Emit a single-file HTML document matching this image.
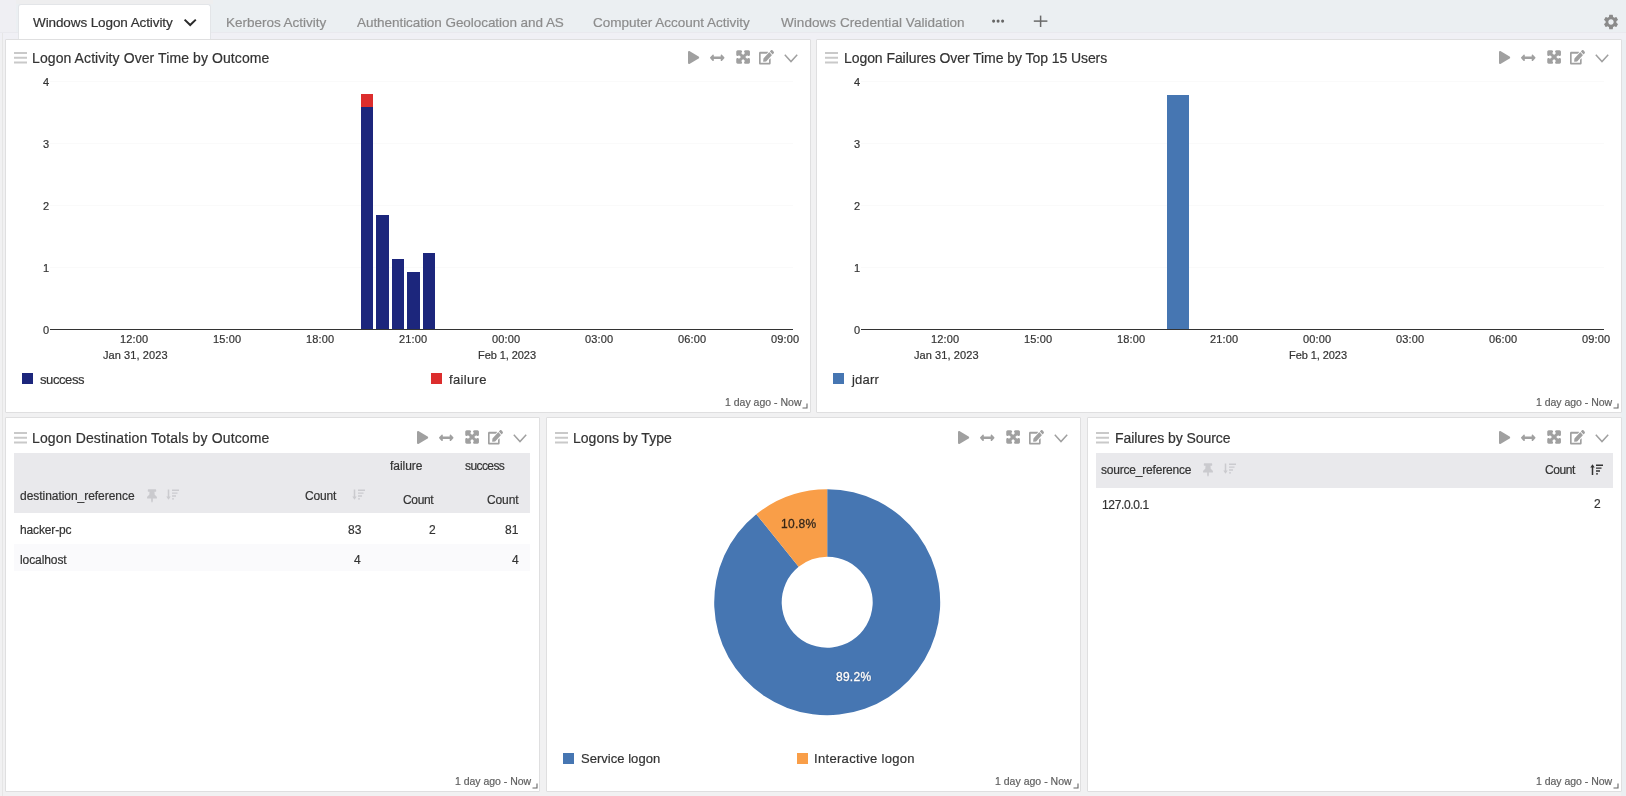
<!DOCTYPE html>
<html><head><meta charset="utf-8"><style>
html,body{margin:0;padding:0;width:1626px;height:796px;overflow:hidden;background:#ebeff2;font-family:"Liberation Sans", sans-serif;}
body{position:relative;}
</style></head><body>
<div style="position:absolute;left:0px;top:0px;width:1626px;height:32px;background:#ebeff2"></div>
<div style="position:absolute;left:0px;top:0px;width:16px;height:32px;background:#efeff3"></div>
<div style="position:absolute;left:16px;top:0px;width:197px;height:4px;background:#eeeeef"></div>
<div style="position:absolute;left:0px;top:32px;width:1621px;height:764px;background:#f1f1f2"></div>
<div style="position:absolute;left:0px;top:32px;width:1626px;height:8px;background:#f0f0f5"></div>
<div style="position:absolute;left:1621px;top:40px;width:5px;height:756px;background:#ebeff2"></div>
<div style="position:absolute;left:0px;top:32px;width:1626px;height:1px;background:#e9e9ee"></div>
<div style="position:absolute;left:2px;top:33px;width:1px;height:763px;background:#e6e6e6"></div>
<div style="position:absolute;left:18px;top:4px;width:193px;height:36px;background:#fff;border:1px solid #e3e5e8;border-bottom:none;border-radius:3px 3px 0 0;box-sizing:border-box"></div>
<div style="position:absolute;left:33.30px;top:16px;font-size:13.5px;line-height:13.5px;color:#333;letter-spacing:-0.101px;white-space:nowrap;will-change:transform;-webkit-text-stroke:0.2px #333;font-weight:normal;">Windows Logon Activity</div>
<svg style="position:absolute;left:183px;top:16.5px" width="15" height="10" viewBox="0 0 15 10"><polyline points="1.6,2.6 7.2,8 12.8,2.6" fill="none" stroke="#2a2a2a" stroke-width="2"/></svg>
<div style="position:absolute;left:226.30px;top:16px;font-size:13.5px;line-height:13.5px;color:#8c8c8c;letter-spacing:-0.021px;white-space:nowrap;will-change:transform;-webkit-text-stroke:0.2px #8c8c8c;font-weight:normal;">Kerberos Activity</div>
<div style="position:absolute;left:356.80px;top:16px;font-size:13.5px;line-height:13.5px;color:#8c8c8c;letter-spacing:-0.056px;white-space:nowrap;will-change:transform;-webkit-text-stroke:0.2px #8c8c8c;font-weight:normal;">Authentication Geolocation and AS</div>
<div style="position:absolute;left:593.30px;top:16px;font-size:13.5px;line-height:13.5px;color:#8c8c8c;letter-spacing:-0.002px;white-space:nowrap;will-change:transform;-webkit-text-stroke:0.2px #8c8c8c;font-weight:normal;">Computer Account Activity</div>
<div style="position:absolute;left:780.70px;top:16px;font-size:13.5px;line-height:13.5px;color:#8c8c8c;letter-spacing:0.054px;white-space:nowrap;will-change:transform;-webkit-text-stroke:0.2px #8c8c8c;font-weight:normal;">Windows Credential Validation</div>
<svg style="position:absolute;left:985px;top:10px" width="70" height="24" viewBox="985 10 70 24"><circle cx="993.6" cy="21.1" r="1.55" fill="#666"/><circle cx="998.1" cy="21.1" r="1.55" fill="#666"/><circle cx="1002.6" cy="21.1" r="1.55" fill="#666"/><rect x="1033.8" y="20.35" width="13.6" height="1.5" fill="#6a6a6a"/><rect x="1039.85" y="15.6" width="1.5" height="11.4" fill="#6a6a6a"/></svg>
<svg style="position:absolute;left:1601.5px;top:12.6px" width="18" height="18" viewBox="0 0 24 24"><path fill="#8a8a8a" d="M19.14 12.94c.04-.3.06-.61.06-.94 0-.32-.02-.64-.07-.94l2.03-1.58a.49.49 0 0 0 .12-.61l-1.920-3.32a.488.488 0 0 0-.59-.22l-2.39.96c-.5-.38-1.03-.7-1.62-.94l-.36-2.54a.484.484 0 0 0-.48-.41h-3.84c-.24 0-.43.17-.47.41l-.36 2.54c-.59.24-1.13.57-1.62.94l-2.39-.96c-.22-.08-.47 0-.59.22L2.74 8.870c-.12.21-.08.47.12.61l2.03 1.58c-.05.3-.09.63-.09.94s.02.64.07.94l-2.03 1.58a.49.49 0 0 0-.12.61l1.92 3.32c.12.22.37.29.59.22l2.39-.96c.5.38 1.03.7 1.62.94l.36 2.54c.05.24.24.41.48.41h3.84c.24 0 .44-.17.47-.41l.36-2.54c.59-.24 1.13-.56 1.62-.94l2.39.96c.22.08.47 0 .59-.22l1.92-3.32c.12-.22.07-.47-.12-.61l-2.01-1.58zM12 15.6c-1.98 0-3.6-1.62-3.6-3.6s1.62-3.6 3.6-3.6 3.6 1.62 3.6 3.6-1.62 3.6-3.6 3.6z"/></svg>
<div style="position:absolute;left:5px;top:39px;width:806px;height:374px;background:#fff;border:1px solid #dfdfe0;box-sizing:border-box;border-radius:1px"></div>
<div style="position:absolute;left:816px;top:39px;width:806px;height:374px;background:#fff;border:1px solid #dfdfe0;box-sizing:border-box;border-radius:1px"></div>
<div style="position:absolute;left:5px;top:417px;width:535px;height:375px;background:#fff;border:1px solid #dfdfe0;box-sizing:border-box;border-radius:1px"></div>
<div style="position:absolute;left:546px;top:417px;width:535px;height:375px;background:#fff;border:1px solid #dfdfe0;box-sizing:border-box;border-radius:1px"></div>
<div style="position:absolute;left:1087px;top:417px;width:535px;height:375px;background:#fff;border:1px solid #dfdfe0;box-sizing:border-box;border-radius:1px"></div>
<svg style="position:absolute;left:14px;top:49.8px" width="13" height="16" viewBox="0 0 13 16"><rect x="0" y="2" width="13" height="2" fill="#c9c9c9"/><rect x="0" y="6.75" width="13" height="2" fill="#c9c9c9"/><rect x="0" y="11.5" width="13" height="2" fill="#c9c9c9"/></svg>
<div style="position:absolute;left:32.40px;top:51px;font-size:14px;line-height:14px;color:#333;letter-spacing:0.093px;white-space:nowrap;will-change:transform;-webkit-text-stroke:0.2px #333;font-weight:normal;">Logon Activity Over Time by Outcome</div>
<svg style="position:absolute;left:688px;top:50.8px;overflow:visible" width="11.2" height="13" viewBox="0 0 448 512" preserveAspectRatio="none"><path d="M424.4 214.7L72.4 6.6C43.8-10.3 0 6.1 0 47.9V464c0 37.5 40.7 60.1 72.4 41.3l352-208c31.4-18.5 31.5-64.1 0-82.6z" fill="#a0a0a0"/></svg>
<svg style="position:absolute;left:710px;top:53.5px;overflow:visible" width="14.5" height="7.6" viewBox="0 130 512 252" preserveAspectRatio="none"><path d="M377.941 169.941V216H134.059v-46.059c0-21.382-25.851-32.090-40.971-16.971L7.029 239.029c-9.373 9.373-9.373 24.568 0 33.941l86.059 86.059c15.119 15.119 40.971 4.411 40.971-16.971V296h243.882v46.059c0 21.382 25.851 32.090 40.971 16.971l86.059-86.059c9.373-9.373 9.373-24.568 0-33.941l-86.059-86.059c-15.119-15.120-40.971-4.412-40.971 16.970z" fill="#a0a0a0"/></svg>
<svg style="position:absolute;left:736.7px;top:51.3px;overflow:visible" width="12.2" height="12" viewBox="0 32 448 448" preserveAspectRatio="none"><path d="M448 344v112a23.940 23.940 0 0 1-24 24H312c-21.390 0-32.090-25.900-17-41l36.200-36.200L224 295.600 116.770 402.900 153 439c15.090 15.100 4.390 41-17 41H24a23.940 23.940 0 0 1-24-24V344c0-21.400 25.890-32.100 41-17l36.190 36.200L184.500 256 77.210 148.700 41 185c-15.100 15.100-41 4.400-41-17V56a23.940 23.940 0 0 1 24-24h112c21.390 0 32.090 25.900 17 41l-36.200 36.200L224 216.400l107.230-107.300L295 73c-15.090-15.100-4.390-41 17-41h112a23.940 23.940 0 0 1 24 24v112c0 21.400-25.890 32.100-41 17l-36.190-36.200L263.500 256l107.300 107.300L407 327.100c15.100-15.200 41-4.500 41 16.900z" fill="#a0a0a0" stroke="#a0a0a0" stroke-width="55" stroke-linejoin="round"/></svg>
<svg style="position:absolute;left:758.8px;top:50.199999999999996px;overflow:visible" width="15" height="14.6" viewBox="0 0 576 512" preserveAspectRatio="none"><path d="M402.6 83.2l90.2 90.2c3.8 3.8 3.8 10 0 13.8L274.4 405.6l-92.8 10.3c-12.4 1.4-22.9-9.1-21.5-21.5l10.3-92.8L388.8 83.2c3.8-3.8 10-3.8 13.8 0zm162-22.9l-48.8-48.8c-15.2-15.2-39.9-15.2-55.2 0l-35.4 35.4c-3.8 3.8-3.8 10 0 13.8l90.2 90.2c3.8 3.8 10 3.8 13.8 0l35.4-35.4c15.2-15.3 15.2-40 0-55.2zM384 346.2V448H64V128h229.8c3.2 0 6.2-1.3 8.5-3.5l40-40c7.6-7.6 2.2-20.5-8.5-20.5H48C21.5 64 0 85.5 0 112v352c0 26.5 21.5 48 48 48h352c26.5 0 48-21.5 48-48V306.2c0-10.7-12.9-16-20.5-8.5l-40 40c-2.2 2.3-3.5 5.3-3.5 8.5z" fill="#a0a0a0"/></svg>
<svg style="position:absolute;left:783.5px;top:53.8px" width="14" height="9" viewBox="0 0 14 9"><polyline points="0.8,0.8 7,7.6 13.2,0.8" fill="none" stroke="#a0a0a0" stroke-width="1.5"/></svg>
<svg style="position:absolute;left:825px;top:49.8px" width="13" height="16" viewBox="0 0 13 16"><rect x="0" y="2" width="13" height="2" fill="#c9c9c9"/><rect x="0" y="6.75" width="13" height="2" fill="#c9c9c9"/><rect x="0" y="11.5" width="13" height="2" fill="#c9c9c9"/></svg>
<div style="position:absolute;left:843.60px;top:51px;font-size:14px;line-height:14px;color:#333;letter-spacing:-0.068px;white-space:nowrap;will-change:transform;-webkit-text-stroke:0.2px #333;font-weight:normal;">Logon Failures Over Time by Top 15 Users</div>
<svg style="position:absolute;left:1499px;top:50.8px;overflow:visible" width="11.2" height="13" viewBox="0 0 448 512" preserveAspectRatio="none"><path d="M424.4 214.7L72.4 6.6C43.8-10.3 0 6.1 0 47.9V464c0 37.5 40.7 60.1 72.4 41.3l352-208c31.4-18.5 31.5-64.1 0-82.6z" fill="#a0a0a0"/></svg>
<svg style="position:absolute;left:1521px;top:53.5px;overflow:visible" width="14.5" height="7.6" viewBox="0 130 512 252" preserveAspectRatio="none"><path d="M377.941 169.941V216H134.059v-46.059c0-21.382-25.851-32.090-40.971-16.971L7.029 239.029c-9.373 9.373-9.373 24.568 0 33.941l86.059 86.059c15.119 15.119 40.971 4.411 40.971-16.971V296h243.882v46.059c0 21.382 25.851 32.090 40.971 16.971l86.059-86.059c9.373-9.373 9.373-24.568 0-33.941l-86.059-86.059c-15.119-15.120-40.971-4.412-40.971 16.970z" fill="#a0a0a0"/></svg>
<svg style="position:absolute;left:1547.7px;top:51.3px;overflow:visible" width="12.2" height="12" viewBox="0 32 448 448" preserveAspectRatio="none"><path d="M448 344v112a23.940 23.940 0 0 1-24 24H312c-21.390 0-32.090-25.900-17-41l36.200-36.200L224 295.600 116.770 402.900 153 439c15.090 15.100 4.390 41-17 41H24a23.940 23.940 0 0 1-24-24V344c0-21.400 25.890-32.100 41-17l36.190 36.200L184.500 256 77.210 148.700 41 185c-15.100 15.100-41 4.400-41-17V56a23.940 23.940 0 0 1 24-24h112c21.390 0 32.090 25.900 17 41l-36.200 36.200L224 216.400l107.230-107.300L295 73c-15.090-15.100-4.390-41 17-41h112a23.940 23.940 0 0 1 24 24v112c0 21.400-25.890 32.100-41 17l-36.190-36.200L263.500 256l107.300 107.300L407 327.100c15.100-15.200 41-4.500 41 16.900z" fill="#a0a0a0" stroke="#a0a0a0" stroke-width="55" stroke-linejoin="round"/></svg>
<svg style="position:absolute;left:1569.8px;top:50.199999999999996px;overflow:visible" width="15" height="14.6" viewBox="0 0 576 512" preserveAspectRatio="none"><path d="M402.6 83.2l90.2 90.2c3.8 3.8 3.8 10 0 13.8L274.4 405.6l-92.8 10.3c-12.4 1.4-22.9-9.1-21.5-21.5l10.3-92.8L388.8 83.2c3.8-3.8 10-3.8 13.8 0zm162-22.9l-48.8-48.8c-15.2-15.2-39.9-15.2-55.2 0l-35.4 35.4c-3.8 3.8-3.8 10 0 13.8l90.2 90.2c3.8 3.8 10 3.8 13.8 0l35.4-35.4c15.2-15.3 15.2-40 0-55.2zM384 346.2V448H64V128h229.8c3.2 0 6.2-1.3 8.5-3.5l40-40c7.6-7.6 2.2-20.5-8.5-20.5H48C21.5 64 0 85.5 0 112v352c0 26.5 21.5 48 48 48h352c26.5 0 48-21.5 48-48V306.2c0-10.7-12.9-16-20.5-8.5l-40 40c-2.2 2.3-3.5 5.3-3.5 8.5z" fill="#a0a0a0"/></svg>
<svg style="position:absolute;left:1594.5px;top:53.8px" width="14" height="9" viewBox="0 0 14 9"><polyline points="0.8,0.8 7,7.6 13.2,0.8" fill="none" stroke="#a0a0a0" stroke-width="1.5"/></svg>
<svg style="position:absolute;left:14px;top:429.8px" width="13" height="16" viewBox="0 0 13 16"><rect x="0" y="2" width="13" height="2" fill="#c9c9c9"/><rect x="0" y="6.75" width="13" height="2" fill="#c9c9c9"/><rect x="0" y="11.5" width="13" height="2" fill="#c9c9c9"/></svg>
<div style="position:absolute;left:32.40px;top:431px;font-size:14px;line-height:14px;color:#333;letter-spacing:0.144px;white-space:nowrap;will-change:transform;-webkit-text-stroke:0.2px #333;font-weight:normal;">Logon Destination Totals by Outcome</div>
<svg style="position:absolute;left:417px;top:430.8px;overflow:visible" width="11.2" height="13" viewBox="0 0 448 512" preserveAspectRatio="none"><path d="M424.4 214.7L72.4 6.6C43.8-10.3 0 6.1 0 47.9V464c0 37.5 40.7 60.1 72.4 41.3l352-208c31.4-18.5 31.5-64.1 0-82.6z" fill="#a0a0a0"/></svg>
<svg style="position:absolute;left:439px;top:433.5px;overflow:visible" width="14.5" height="7.6" viewBox="0 130 512 252" preserveAspectRatio="none"><path d="M377.941 169.941V216H134.059v-46.059c0-21.382-25.851-32.090-40.971-16.971L7.029 239.029c-9.373 9.373-9.373 24.568 0 33.941l86.059 86.059c15.119 15.119 40.971 4.411 40.971-16.971V296h243.882v46.059c0 21.382 25.851 32.090 40.971 16.971l86.059-86.059c9.373-9.373 9.373-24.568 0-33.941l-86.059-86.059c-15.119-15.120-40.971-4.412-40.971 16.970z" fill="#a0a0a0"/></svg>
<svg style="position:absolute;left:465.7px;top:431.3px;overflow:visible" width="12.2" height="12" viewBox="0 32 448 448" preserveAspectRatio="none"><path d="M448 344v112a23.940 23.940 0 0 1-24 24H312c-21.390 0-32.090-25.900-17-41l36.200-36.200L224 295.600 116.770 402.900 153 439c15.090 15.100 4.390 41-17 41H24a23.940 23.940 0 0 1-24-24V344c0-21.400 25.890-32.100 41-17l36.190 36.200L184.500 256 77.210 148.700 41 185c-15.100 15.100-41 4.400-41-17V56a23.940 23.940 0 0 1 24-24h112c21.390 0 32.090 25.900 17 41l-36.200 36.200L224 216.400l107.230-107.300L295 73c-15.090-15.100-4.390-41 17-41h112a23.940 23.940 0 0 1 24 24v112c0 21.400-25.890 32.100-41 17l-36.190-36.200L263.500 256l107.300 107.300L407 327.100c15.100-15.200 41-4.500 41 16.900z" fill="#a0a0a0" stroke="#a0a0a0" stroke-width="55" stroke-linejoin="round"/></svg>
<svg style="position:absolute;left:487.8px;top:430.2px;overflow:visible" width="15" height="14.6" viewBox="0 0 576 512" preserveAspectRatio="none"><path d="M402.6 83.2l90.2 90.2c3.8 3.8 3.8 10 0 13.8L274.4 405.6l-92.8 10.3c-12.4 1.4-22.9-9.1-21.5-21.5l10.3-92.8L388.8 83.2c3.8-3.8 10-3.8 13.8 0zm162-22.9l-48.8-48.8c-15.2-15.2-39.9-15.2-55.2 0l-35.4 35.4c-3.8 3.8-3.8 10 0 13.8l90.2 90.2c3.8 3.8 10 3.8 13.8 0l35.4-35.4c15.2-15.3 15.2-40 0-55.2zM384 346.2V448H64V128h229.8c3.2 0 6.2-1.3 8.5-3.5l40-40c7.6-7.6 2.2-20.5-8.5-20.5H48C21.5 64 0 85.5 0 112v352c0 26.5 21.5 48 48 48h352c26.5 0 48-21.5 48-48V306.2c0-10.7-12.9-16-20.5-8.5l-40 40c-2.2 2.3-3.5 5.3-3.5 8.5z" fill="#a0a0a0"/></svg>
<svg style="position:absolute;left:512.5px;top:433.8px" width="14" height="9" viewBox="0 0 14 9"><polyline points="0.8,0.8 7,7.6 13.2,0.8" fill="none" stroke="#a0a0a0" stroke-width="1.5"/></svg>
<svg style="position:absolute;left:555px;top:429.8px" width="13" height="16" viewBox="0 0 13 16"><rect x="0" y="2" width="13" height="2" fill="#c9c9c9"/><rect x="0" y="6.75" width="13" height="2" fill="#c9c9c9"/><rect x="0" y="11.5" width="13" height="2" fill="#c9c9c9"/></svg>
<div style="position:absolute;left:572.80px;top:431px;font-size:14px;line-height:14px;color:#333;letter-spacing:0.011px;white-space:nowrap;will-change:transform;-webkit-text-stroke:0.2px #333;font-weight:normal;">Logons by Type</div>
<svg style="position:absolute;left:958px;top:430.8px;overflow:visible" width="11.2" height="13" viewBox="0 0 448 512" preserveAspectRatio="none"><path d="M424.4 214.7L72.4 6.6C43.8-10.3 0 6.1 0 47.9V464c0 37.5 40.7 60.1 72.4 41.3l352-208c31.4-18.5 31.5-64.1 0-82.6z" fill="#a0a0a0"/></svg>
<svg style="position:absolute;left:980px;top:433.5px;overflow:visible" width="14.5" height="7.6" viewBox="0 130 512 252" preserveAspectRatio="none"><path d="M377.941 169.941V216H134.059v-46.059c0-21.382-25.851-32.090-40.971-16.971L7.029 239.029c-9.373 9.373-9.373 24.568 0 33.941l86.059 86.059c15.119 15.119 40.971 4.411 40.971-16.971V296h243.882v46.059c0 21.382 25.851 32.090 40.971 16.971l86.059-86.059c9.373-9.373 9.373-24.568 0-33.941l-86.059-86.059c-15.119-15.120-40.971-4.412-40.971 16.970z" fill="#a0a0a0"/></svg>
<svg style="position:absolute;left:1006.7px;top:431.3px;overflow:visible" width="12.2" height="12" viewBox="0 32 448 448" preserveAspectRatio="none"><path d="M448 344v112a23.940 23.940 0 0 1-24 24H312c-21.390 0-32.090-25.900-17-41l36.200-36.200L224 295.600 116.770 402.900 153 439c15.090 15.100 4.390 41-17 41H24a23.940 23.940 0 0 1-24-24V344c0-21.400 25.890-32.100 41-17l36.190 36.200L184.500 256 77.210 148.700 41 185c-15.100 15.100-41 4.400-41-17V56a23.940 23.940 0 0 1 24-24h112c21.390 0 32.090 25.900 17 41l-36.200 36.200L224 216.400l107.230-107.300L295 73c-15.090-15.100-4.390-41 17-41h112a23.940 23.940 0 0 1 24 24v112c0 21.400-25.890 32.100-41 17l-36.190-36.200L263.500 256l107.300 107.300L407 327.100c15.100-15.200 41-4.500 41 16.900z" fill="#a0a0a0" stroke="#a0a0a0" stroke-width="55" stroke-linejoin="round"/></svg>
<svg style="position:absolute;left:1028.8px;top:430.2px;overflow:visible" width="15" height="14.6" viewBox="0 0 576 512" preserveAspectRatio="none"><path d="M402.6 83.2l90.2 90.2c3.8 3.8 3.8 10 0 13.8L274.4 405.6l-92.8 10.3c-12.4 1.4-22.9-9.1-21.5-21.5l10.3-92.8L388.8 83.2c3.8-3.8 10-3.8 13.8 0zm162-22.9l-48.8-48.8c-15.2-15.2-39.9-15.2-55.2 0l-35.4 35.4c-3.8 3.8-3.8 10 0 13.8l90.2 90.2c3.8 3.8 10 3.8 13.8 0l35.4-35.4c15.2-15.3 15.2-40 0-55.2zM384 346.2V448H64V128h229.8c3.2 0 6.2-1.3 8.5-3.5l40-40c7.6-7.6 2.2-20.5-8.5-20.5H48C21.5 64 0 85.5 0 112v352c0 26.5 21.5 48 48 48h352c26.5 0 48-21.5 48-48V306.2c0-10.7-12.9-16-20.5-8.5l-40 40c-2.2 2.3-3.5 5.3-3.5 8.5z" fill="#a0a0a0"/></svg>
<svg style="position:absolute;left:1053.5px;top:433.8px" width="14" height="9" viewBox="0 0 14 9"><polyline points="0.8,0.8 7,7.6 13.2,0.8" fill="none" stroke="#a0a0a0" stroke-width="1.5"/></svg>
<svg style="position:absolute;left:1096px;top:429.8px" width="13" height="16" viewBox="0 0 13 16"><rect x="0" y="2" width="13" height="2" fill="#c9c9c9"/><rect x="0" y="6.75" width="13" height="2" fill="#c9c9c9"/><rect x="0" y="11.5" width="13" height="2" fill="#c9c9c9"/></svg>
<div style="position:absolute;left:1114.70px;top:431px;font-size:14px;line-height:14px;color:#333;letter-spacing:-0.072px;white-space:nowrap;will-change:transform;-webkit-text-stroke:0.2px #333;font-weight:normal;">Failures by Source</div>
<svg style="position:absolute;left:1499px;top:430.8px;overflow:visible" width="11.2" height="13" viewBox="0 0 448 512" preserveAspectRatio="none"><path d="M424.4 214.7L72.4 6.6C43.8-10.3 0 6.1 0 47.9V464c0 37.5 40.7 60.1 72.4 41.3l352-208c31.4-18.5 31.5-64.1 0-82.6z" fill="#a0a0a0"/></svg>
<svg style="position:absolute;left:1521px;top:433.5px;overflow:visible" width="14.5" height="7.6" viewBox="0 130 512 252" preserveAspectRatio="none"><path d="M377.941 169.941V216H134.059v-46.059c0-21.382-25.851-32.090-40.971-16.971L7.029 239.029c-9.373 9.373-9.373 24.568 0 33.941l86.059 86.059c15.119 15.119 40.971 4.411 40.971-16.971V296h243.882v46.059c0 21.382 25.851 32.090 40.971 16.971l86.059-86.059c9.373-9.373 9.373-24.568 0-33.941l-86.059-86.059c-15.119-15.120-40.971-4.412-40.971 16.970z" fill="#a0a0a0"/></svg>
<svg style="position:absolute;left:1547.7px;top:431.3px;overflow:visible" width="12.2" height="12" viewBox="0 32 448 448" preserveAspectRatio="none"><path d="M448 344v112a23.940 23.940 0 0 1-24 24H312c-21.390 0-32.090-25.900-17-41l36.200-36.200L224 295.600 116.770 402.900 153 439c15.090 15.100 4.390 41-17 41H24a23.940 23.940 0 0 1-24-24V344c0-21.400 25.890-32.100 41-17l36.190 36.200L184.500 256 77.210 148.700 41 185c-15.100 15.100-41 4.400-41-17V56a23.940 23.940 0 0 1 24-24h112c21.390 0 32.090 25.900 17 41l-36.200 36.200L224 216.400l107.230-107.300L295 73c-15.090-15.100-4.390-41 17-41h112a23.940 23.940 0 0 1 24 24v112c0 21.400-25.890 32.100-41 17l-36.190-36.200L263.500 256l107.300 107.300L407 327.100c15.100-15.200 41-4.500 41 16.900z" fill="#a0a0a0" stroke="#a0a0a0" stroke-width="55" stroke-linejoin="round"/></svg>
<svg style="position:absolute;left:1569.8px;top:430.2px;overflow:visible" width="15" height="14.6" viewBox="0 0 576 512" preserveAspectRatio="none"><path d="M402.6 83.2l90.2 90.2c3.8 3.8 3.8 10 0 13.8L274.4 405.6l-92.8 10.3c-12.4 1.4-22.9-9.1-21.5-21.5l10.3-92.8L388.8 83.2c3.8-3.8 10-3.8 13.8 0zm162-22.9l-48.8-48.8c-15.2-15.2-39.9-15.2-55.2 0l-35.4 35.4c-3.8 3.8-3.8 10 0 13.8l90.2 90.2c3.8 3.8 10 3.8 13.8 0l35.4-35.4c15.2-15.3 15.2-40 0-55.2zM384 346.2V448H64V128h229.8c3.2 0 6.2-1.3 8.5-3.5l40-40c7.6-7.6 2.2-20.5-8.5-20.5H48C21.5 64 0 85.5 0 112v352c0 26.5 21.5 48 48 48h352c26.5 0 48-21.5 48-48V306.2c0-10.7-12.9-16-20.5-8.5l-40 40c-2.2 2.3-3.5 5.3-3.5 8.5z" fill="#a0a0a0"/></svg>
<svg style="position:absolute;left:1594.5px;top:433.8px" width="14" height="9" viewBox="0 0 14 9"><polyline points="0.8,0.8 7,7.6 13.2,0.8" fill="none" stroke="#a0a0a0" stroke-width="1.5"/></svg>
<div style="position:absolute;left:43.00px;top:325px;font-size:11px;line-height:11px;color:#333;letter-spacing:0.000px;white-space:nowrap;will-change:transform;-webkit-text-stroke:0.2px #333;font-weight:normal;">0</div>
<div style="position:absolute;left:50px;top:267px;width:743px;height:1px;background:#fafafa"></div>
<div style="position:absolute;left:43.00px;top:263px;font-size:11px;line-height:11px;color:#333;letter-spacing:0.000px;white-space:nowrap;will-change:transform;-webkit-text-stroke:0.2px #333;font-weight:normal;">1</div>
<div style="position:absolute;left:50px;top:205px;width:743px;height:1px;background:#fafafa"></div>
<div style="position:absolute;left:43.00px;top:201px;font-size:11px;line-height:11px;color:#333;letter-spacing:0.000px;white-space:nowrap;will-change:transform;-webkit-text-stroke:0.2px #333;font-weight:normal;">2</div>
<div style="position:absolute;left:50px;top:143px;width:743px;height:1px;background:#fafafa"></div>
<div style="position:absolute;left:43.00px;top:139px;font-size:11px;line-height:11px;color:#333;letter-spacing:0.000px;white-space:nowrap;will-change:transform;-webkit-text-stroke:0.2px #333;font-weight:normal;">3</div>
<div style="position:absolute;left:50px;top:81px;width:743px;height:1px;background:#fafafa"></div>
<div style="position:absolute;left:43.00px;top:77px;font-size:11px;line-height:11px;color:#333;letter-spacing:0.000px;white-space:nowrap;will-change:transform;-webkit-text-stroke:0.2px #333;font-weight:normal;">4</div>
<div style="position:absolute;left:50px;top:328.6px;width:743.2px;height:1.2px;background:#333"></div>
<div style="position:absolute;left:120.40px;top:334px;font-size:11px;line-height:11px;color:#333;letter-spacing:0.148px;white-space:nowrap;will-change:transform;-webkit-text-stroke:0.2px #333;font-weight:normal;">12:00</div>
<div style="position:absolute;left:213.37px;top:334px;font-size:11px;line-height:11px;color:#333;letter-spacing:0.148px;white-space:nowrap;will-change:transform;-webkit-text-stroke:0.2px #333;font-weight:normal;">15:00</div>
<div style="position:absolute;left:306.34px;top:334px;font-size:11px;line-height:11px;color:#333;letter-spacing:0.148px;white-space:nowrap;will-change:transform;-webkit-text-stroke:0.2px #333;font-weight:normal;">18:00</div>
<div style="position:absolute;left:399.31px;top:334px;font-size:11px;line-height:11px;color:#333;letter-spacing:0.148px;white-space:nowrap;will-change:transform;-webkit-text-stroke:0.2px #333;font-weight:normal;">21:00</div>
<div style="position:absolute;left:492.28px;top:334px;font-size:11px;line-height:11px;color:#333;letter-spacing:0.148px;white-space:nowrap;will-change:transform;-webkit-text-stroke:0.2px #333;font-weight:normal;">00:00</div>
<div style="position:absolute;left:585.25px;top:334px;font-size:11px;line-height:11px;color:#333;letter-spacing:0.148px;white-space:nowrap;will-change:transform;-webkit-text-stroke:0.2px #333;font-weight:normal;">03:00</div>
<div style="position:absolute;left:678.22px;top:334px;font-size:11px;line-height:11px;color:#333;letter-spacing:0.148px;white-space:nowrap;will-change:transform;-webkit-text-stroke:0.2px #333;font-weight:normal;">06:00</div>
<div style="position:absolute;left:771.19px;top:334px;font-size:11px;line-height:11px;color:#333;letter-spacing:0.148px;white-space:nowrap;will-change:transform;-webkit-text-stroke:0.2px #333;font-weight:normal;">09:00</div>
<div style="position:absolute;left:102.70px;top:350px;font-size:11px;line-height:11px;color:#333;letter-spacing:0.083px;white-space:nowrap;will-change:transform;-webkit-text-stroke:0.2px #333;font-weight:normal;">Jan 31, 2023</div>
<div style="position:absolute;left:477.50px;top:350px;font-size:11px;line-height:11px;color:#333;letter-spacing:-0.069px;white-space:nowrap;will-change:transform;-webkit-text-stroke:0.2px #333;font-weight:normal;">Feb 1, 2023</div>
<div style="position:absolute;left:361px;top:94px;width:12px;height:13px;background:#dc2d2d"></div>
<div style="position:absolute;left:361px;top:107px;width:12px;height:222px;background:#1c267c"></div>
<div style="position:absolute;left:376px;top:215px;width:13px;height:114px;background:#1c267c"></div>
<div style="position:absolute;left:392px;top:259px;width:12px;height:70px;background:#1c267c"></div>
<div style="position:absolute;left:407px;top:272px;width:13px;height:57px;background:#1c267c"></div>
<div style="position:absolute;left:423px;top:253px;width:12px;height:76px;background:#1c267c"></div>
<div style="position:absolute;left:22px;top:373px;width:11px;height:11px;background:#1c267c"></div>
<div style="position:absolute;left:40.00px;top:373px;font-size:13px;line-height:13px;color:#333;letter-spacing:-0.410px;white-space:nowrap;will-change:transform;-webkit-text-stroke:0.2px #333;font-weight:normal;">success</div>
<div style="position:absolute;left:431px;top:373px;width:11px;height:11px;background:#dc2d2d"></div>
<div style="position:absolute;left:449.00px;top:373px;font-size:13px;line-height:13px;color:#333;letter-spacing:0.354px;white-space:nowrap;will-change:transform;-webkit-text-stroke:0.2px #333;font-weight:normal;">failure</div>
<div style="position:absolute;left:854.00px;top:325px;font-size:11px;line-height:11px;color:#333;letter-spacing:0.000px;white-space:nowrap;will-change:transform;-webkit-text-stroke:0.2px #333;font-weight:normal;">0</div>
<div style="position:absolute;left:861px;top:267px;width:743px;height:1px;background:#fafafa"></div>
<div style="position:absolute;left:854.00px;top:263px;font-size:11px;line-height:11px;color:#333;letter-spacing:0.000px;white-space:nowrap;will-change:transform;-webkit-text-stroke:0.2px #333;font-weight:normal;">1</div>
<div style="position:absolute;left:861px;top:205px;width:743px;height:1px;background:#fafafa"></div>
<div style="position:absolute;left:854.00px;top:201px;font-size:11px;line-height:11px;color:#333;letter-spacing:0.000px;white-space:nowrap;will-change:transform;-webkit-text-stroke:0.2px #333;font-weight:normal;">2</div>
<div style="position:absolute;left:861px;top:143px;width:743px;height:1px;background:#fafafa"></div>
<div style="position:absolute;left:854.00px;top:139px;font-size:11px;line-height:11px;color:#333;letter-spacing:0.000px;white-space:nowrap;will-change:transform;-webkit-text-stroke:0.2px #333;font-weight:normal;">3</div>
<div style="position:absolute;left:861px;top:81px;width:743px;height:1px;background:#fafafa"></div>
<div style="position:absolute;left:854.00px;top:77px;font-size:11px;line-height:11px;color:#333;letter-spacing:0.000px;white-space:nowrap;will-change:transform;-webkit-text-stroke:0.2px #333;font-weight:normal;">4</div>
<div style="position:absolute;left:861px;top:328.6px;width:743.2px;height:1.2px;background:#333"></div>
<div style="position:absolute;left:931.40px;top:334px;font-size:11px;line-height:11px;color:#333;letter-spacing:0.148px;white-space:nowrap;will-change:transform;-webkit-text-stroke:0.2px #333;font-weight:normal;">12:00</div>
<div style="position:absolute;left:1024.37px;top:334px;font-size:11px;line-height:11px;color:#333;letter-spacing:0.148px;white-space:nowrap;will-change:transform;-webkit-text-stroke:0.2px #333;font-weight:normal;">15:00</div>
<div style="position:absolute;left:1117.34px;top:334px;font-size:11px;line-height:11px;color:#333;letter-spacing:0.148px;white-space:nowrap;will-change:transform;-webkit-text-stroke:0.2px #333;font-weight:normal;">18:00</div>
<div style="position:absolute;left:1210.31px;top:334px;font-size:11px;line-height:11px;color:#333;letter-spacing:0.148px;white-space:nowrap;will-change:transform;-webkit-text-stroke:0.2px #333;font-weight:normal;">21:00</div>
<div style="position:absolute;left:1303.28px;top:334px;font-size:11px;line-height:11px;color:#333;letter-spacing:0.148px;white-space:nowrap;will-change:transform;-webkit-text-stroke:0.2px #333;font-weight:normal;">00:00</div>
<div style="position:absolute;left:1396.25px;top:334px;font-size:11px;line-height:11px;color:#333;letter-spacing:0.148px;white-space:nowrap;will-change:transform;-webkit-text-stroke:0.2px #333;font-weight:normal;">03:00</div>
<div style="position:absolute;left:1489.22px;top:334px;font-size:11px;line-height:11px;color:#333;letter-spacing:0.148px;white-space:nowrap;will-change:transform;-webkit-text-stroke:0.2px #333;font-weight:normal;">06:00</div>
<div style="position:absolute;left:1582.19px;top:334px;font-size:11px;line-height:11px;color:#333;letter-spacing:0.148px;white-space:nowrap;will-change:transform;-webkit-text-stroke:0.2px #333;font-weight:normal;">09:00</div>
<div style="position:absolute;left:913.70px;top:350px;font-size:11px;line-height:11px;color:#333;letter-spacing:0.083px;white-space:nowrap;will-change:transform;-webkit-text-stroke:0.2px #333;font-weight:normal;">Jan 31, 2023</div>
<div style="position:absolute;left:1288.50px;top:350px;font-size:11px;line-height:11px;color:#333;letter-spacing:-0.069px;white-space:nowrap;will-change:transform;-webkit-text-stroke:0.2px #333;font-weight:normal;">Feb 1, 2023</div>
<div style="position:absolute;left:1167px;top:95px;width:22px;height:234px;background:#4676b2"></div>
<div style="position:absolute;left:833px;top:373px;width:11px;height:11px;background:#4676b2"></div>
<div style="position:absolute;left:852.00px;top:373px;font-size:13px;line-height:13px;color:#333;letter-spacing:0.181px;white-space:nowrap;will-change:transform;-webkit-text-stroke:0.2px #333;font-weight:normal;">jdarr</div>
<div style="position:absolute;left:724.80px;top:397px;font-size:10.5px;line-height:10.5px;color:#606060;letter-spacing:0.002px;white-space:nowrap;will-change:transform;-webkit-text-stroke:0.2px #606060;font-weight:normal;">1 day ago - Now</div>
<div style="position:absolute;left:1536.30px;top:397px;font-size:10.5px;line-height:10.5px;color:#606060;letter-spacing:-0.020px;white-space:nowrap;will-change:transform;-webkit-text-stroke:0.2px #606060;font-weight:normal;">1 day ago - Now</div>
<svg style="position:absolute;left:802px;top:403px" width="6" height="6" viewBox="0 0 6 6"><path d="M5 0.5 V5 H0.5" fill="none" stroke="#666" stroke-width="1.1"/></svg>
<svg style="position:absolute;left:1613px;top:403px" width="6" height="6" viewBox="0 0 6 6"><path d="M5 0.5 V5 H0.5" fill="none" stroke="#666" stroke-width="1.1"/></svg>
<div style="position:absolute;left:454.50px;top:776px;font-size:10.5px;line-height:10.5px;color:#606060;letter-spacing:-0.027px;white-space:nowrap;will-change:transform;-webkit-text-stroke:0.2px #606060;font-weight:normal;">1 day ago - Now</div>
<div style="position:absolute;left:995.00px;top:776px;font-size:10.5px;line-height:10.5px;color:#606060;letter-spacing:0.009px;white-space:nowrap;will-change:transform;-webkit-text-stroke:0.2px #606060;font-weight:normal;">1 day ago - Now</div>
<div style="position:absolute;left:1536.30px;top:776px;font-size:10.5px;line-height:10.5px;color:#606060;letter-spacing:-0.020px;white-space:nowrap;will-change:transform;-webkit-text-stroke:0.2px #606060;font-weight:normal;">1 day ago - Now</div>
<svg style="position:absolute;left:531.5px;top:783px" width="6" height="6" viewBox="0 0 6 6"><path d="M5 0.5 V5 H0.5" fill="none" stroke="#666" stroke-width="1.1"/></svg>
<svg style="position:absolute;left:1072.5px;top:783px" width="6" height="6" viewBox="0 0 6 6"><path d="M5 0.5 V5 H0.5" fill="none" stroke="#666" stroke-width="1.1"/></svg>
<svg style="position:absolute;left:1613px;top:783px" width="6" height="6" viewBox="0 0 6 6"><path d="M5 0.5 V5 H0.5" fill="none" stroke="#666" stroke-width="1.1"/></svg>
<div style="position:absolute;left:14px;top:453px;width:516px;height:60px;background:#e9e9ec"></div>
<div style="position:absolute;left:390.20px;top:460px;font-size:12px;line-height:12px;color:#333;letter-spacing:-0.035px;white-space:nowrap;will-change:transform;-webkit-text-stroke:0.2px #333;font-weight:normal;">failure</div>
<div style="position:absolute;left:465.40px;top:460px;font-size:12px;line-height:12px;color:#333;letter-spacing:-0.591px;white-space:nowrap;will-change:transform;-webkit-text-stroke:0.2px #333;font-weight:normal;">success</div>
<div style="position:absolute;left:19.60px;top:490px;font-size:12px;line-height:12px;color:#333;letter-spacing:-0.042px;white-space:nowrap;will-change:transform;-webkit-text-stroke:0.2px #333;font-weight:normal;">destination_reference</div>
<div style="position:absolute;left:305.40px;top:490px;font-size:12px;line-height:12px;color:#333;letter-spacing:-0.197px;white-space:nowrap;will-change:transform;-webkit-text-stroke:0.2px #333;font-weight:normal;">Count</div>
<div style="position:absolute;left:403.00px;top:494px;font-size:12px;line-height:12px;color:#333;letter-spacing:-0.347px;white-space:nowrap;will-change:transform;-webkit-text-stroke:0.2px #333;font-weight:normal;">Count</div>
<div style="position:absolute;left:486.60px;top:494px;font-size:12px;line-height:12px;color:#333;letter-spacing:-0.122px;white-space:nowrap;will-change:transform;-webkit-text-stroke:0.2px #333;font-weight:normal;">Count</div>
<div style="position:absolute;left:14px;top:544px;width:516px;height:27px;background:#fafafc"></div>
<div style="position:absolute;left:19.80px;top:524px;font-size:12px;line-height:12px;color:#333;letter-spacing:-0.136px;white-space:nowrap;will-change:transform;-webkit-text-stroke:0.2px #333;font-weight:normal;">hacker-pc</div>
<div style="position:absolute;left:347.73px;top:524px;font-size:12px;line-height:12px;color:#333;letter-spacing:0.000px;white-space:nowrap;will-change:transform;-webkit-text-stroke:0.2px #333;font-weight:normal;">83</div>
<div style="position:absolute;left:429.00px;top:524px;font-size:12px;line-height:12px;color:#333;letter-spacing:0.000px;white-space:nowrap;will-change:transform;-webkit-text-stroke:0.2px #333;font-weight:normal;">2</div>
<div style="position:absolute;left:505.43px;top:524px;font-size:12px;line-height:12px;color:#333;letter-spacing:0.000px;white-space:nowrap;will-change:transform;-webkit-text-stroke:0.2px #333;font-weight:normal;">81</div>
<div style="position:absolute;left:19.80px;top:554px;font-size:12px;line-height:12px;color:#333;letter-spacing:-0.091px;white-space:nowrap;will-change:transform;-webkit-text-stroke:0.2px #333;font-weight:normal;">localhost</div>
<div style="position:absolute;left:354.40px;top:554px;font-size:12px;line-height:12px;color:#333;letter-spacing:0.000px;white-space:nowrap;will-change:transform;-webkit-text-stroke:0.2px #333;font-weight:normal;">4</div>
<div style="position:absolute;left:512.00px;top:554px;font-size:12px;line-height:12px;color:#333;letter-spacing:0.000px;white-space:nowrap;will-change:transform;-webkit-text-stroke:0.2px #333;font-weight:normal;">4</div>
<svg style="position:absolute;left:146.5px;top:488.5px" width="10" height="14" viewBox="0 0 384 512"><path d="M298.028 214.267L285.793 96H328c13.255 0 24-10.745 24-24V24c0-13.255-10.745-24-24-24H56C42.745 0 32 10.745 32 24v48c0 13.255 10.745 24 24 24h42.207L85.972 214.267C37.465 236.820 0 277.261 0 328c0 13.255 10.745 24 24 24h136v104.007c0 1.242.289 2.467.845 3.578l24 48c2.941 5.882 11.364 5.893 14.311 0l24-48a8.008 8.008 0 0 0 .845-3.578V352h136c13.255 0 24-10.745 24-24-.001-51.183-37.983-91.420-85.973-113.733z" fill="#cacace"/></svg>
<svg style="position:absolute;left:166px;top:489px" width="14" height="11" viewBox="0 0 14 11"><path d="M2.5 0.5 V8" stroke="#cbcbcf" stroke-width="1.5"/><path d="M0.3 7.4 L2.5 10.7 L4.7 7.4 Z" fill="#cbcbcf"/><path d="M6 1.2 H13 M6 4.1 H11.5 M6 7 H10 M6 9.9 H8" stroke="#cbcbcf" stroke-width="1.4"/></svg>
<svg style="position:absolute;left:352px;top:489px" width="14" height="11" viewBox="0 0 14 11"><path d="M2.5 0.5 V8" stroke="#cbcbcf" stroke-width="1.5"/><path d="M0.3 7.4 L2.5 10.7 L4.7 7.4 Z" fill="#cbcbcf"/><path d="M6 1.2 H13 M6 4.1 H11.5 M6 7 H10 M6 9.9 H8" stroke="#cbcbcf" stroke-width="1.4"/></svg>
<div style="position:absolute;left:1096px;top:453px;width:517px;height:35px;background:#e9e9ec"></div>
<div style="position:absolute;left:1101.10px;top:464px;font-size:12px;line-height:12px;color:#333;letter-spacing:-0.201px;white-space:nowrap;will-change:transform;-webkit-text-stroke:0.2px #333;font-weight:normal;">source_reference</div>
<div style="position:absolute;left:1544.70px;top:464px;font-size:12px;line-height:12px;color:#333;letter-spacing:-0.422px;white-space:nowrap;will-change:transform;-webkit-text-stroke:0.2px #333;font-weight:normal;">Count</div>
<div style="position:absolute;left:1101.50px;top:499px;font-size:12px;line-height:12px;color:#333;letter-spacing:-0.359px;white-space:nowrap;will-change:transform;-webkit-text-stroke:0.2px #333;font-weight:normal;">127.0.0.1</div>
<div style="position:absolute;left:1593.60px;top:498px;font-size:12px;line-height:12px;color:#333;letter-spacing:0.000px;white-space:nowrap;will-change:transform;-webkit-text-stroke:0.2px #333;font-weight:normal;">2</div>
<svg style="position:absolute;left:1202.5px;top:463px" width="10" height="14" viewBox="0 0 384 512"><path d="M298.028 214.267L285.793 96H328c13.255 0 24-10.745 24-24V24c0-13.255-10.745-24-24-24H56C42.745 0 32 10.745 32 24v48c0 13.255 10.745 24 24 24h42.207L85.972 214.267C37.465 236.820 0 277.261 0 328c0 13.255 10.745 24 24 24h136v104.007c0 1.242.289 2.467.845 3.578l24 48c2.941 5.882 11.364 5.893 14.311 0l24-48a8.008 8.008 0 0 0 .845-3.578V352h136c13.255 0 24-10.745 24-24-.001-51.183-37.983-91.420-85.973-113.733z" fill="#cacace"/></svg>
<svg style="position:absolute;left:1223px;top:463px" width="14" height="11" viewBox="0 0 14 11"><path d="M2.5 0.5 V8" stroke="#cbcbcf" stroke-width="1.5"/><path d="M0.3 7.4 L2.5 10.7 L4.7 7.4 Z" fill="#cbcbcf"/><path d="M6 1.2 H13 M6 4.1 H11.5 M6 7 H10 M6 9.9 H8" stroke="#cbcbcf" stroke-width="1.4"/></svg>
<svg style="position:absolute;left:1590px;top:463.5px" width="14" height="11" viewBox="0 0 14 11"><path d="M2.5 3 V11" stroke="#333" stroke-width="1.5"/><path d="M0.3 3.6 L2.5 0.3 L4.7 3.6 Z" fill="#333"/><path d="M6 1.2 H13 M6 4.1 H11.5 M6 7 H10 M6 9.9 H8" stroke="#333" stroke-width="1.4"/></svg>
<svg style="position:absolute;left:0;top:0" width="1626" height="796"><path d="M 827.2 489.20000000000005 A 113 113 0 1 1 756.27 514.23 L 798.64 566.78 A 45.5 45.5 0 1 0 827.2 556.7 Z" fill="#4676b2"/><path d="M 756.27 514.23 A 113 113 0 0 1 827.2 489.20000000000005 L 827.2 556.7 A 45.5 45.5 0 0 0 798.64 566.78 Z" fill="#f99e48"/></svg>
<div style="position:absolute;left:780.50px;top:518px;font-size:12px;line-height:12px;color:#3a2410;letter-spacing:0.286px;white-space:nowrap;will-change:transform;-webkit-text-stroke:0.2px #3a2410;font-weight:normal;-webkit-text-stroke:0.35px #3a2410;text-shadow:0 0 1px rgba(255,225,190,0.8)">10.8%</div>
<div style="position:absolute;left:835.70px;top:671px;font-size:12px;line-height:12px;color:#fff;letter-spacing:0.261px;white-space:nowrap;will-change:transform;-webkit-text-stroke:0.2px #fff;font-weight:normal;-webkit-text-stroke:0.35px #fff;text-shadow:0 0 1.2px #102040">89.2%</div>
<div style="position:absolute;left:563px;top:753px;width:11px;height:11px;background:#4676b2"></div>
<div style="position:absolute;left:581.30px;top:752px;font-size:13px;line-height:13px;color:#333;letter-spacing:0.030px;white-space:nowrap;will-change:transform;-webkit-text-stroke:0.2px #333;font-weight:normal;">Service logon</div>
<div style="position:absolute;left:797px;top:753px;width:11px;height:11px;background:#f99e48"></div>
<div style="position:absolute;left:814.00px;top:752px;font-size:13px;line-height:13px;color:#333;letter-spacing:0.321px;white-space:nowrap;will-change:transform;-webkit-text-stroke:0.2px #333;font-weight:normal;">Interactive logon</div>
</body></html>
